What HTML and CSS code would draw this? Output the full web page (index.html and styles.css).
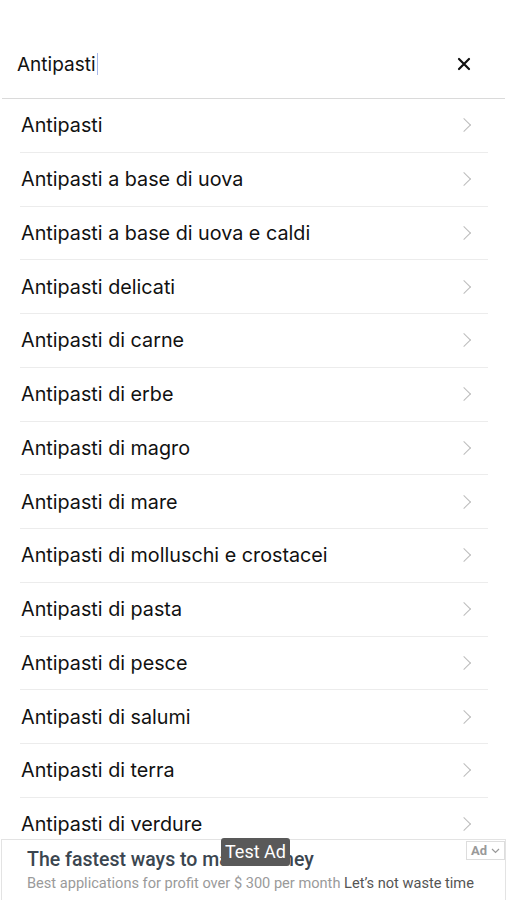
FILE: index.html
```html
<!DOCTYPE html>
<html lang="it">
<head>
    <meta charset="UTF-8">
    <meta name="viewport" content="width=device-width, initial-scale=1.0">
    <title>Ricerca categorie</title>
    <link rel="stylesheet" href="styles.css">
</head>
<body>

    <div class="search-bar">
        <div class="search-input">Antipasti<span class="caret"></span></div>
        <button class="clear-btn" aria-label="Cancella">
            <svg width="14" height="14" viewBox="0 0 14 14">
                <path d="M2 2 L12 12 M12 2 L2 12" stroke="#111" stroke-width="2.2" stroke-linecap="round"/>
            </svg>
        </button>
    </div>

    <ul class="results">
        <li class="row">Antipasti</li>
        <li class="row">Antipasti a base di uova</li>
        <li class="row">Antipasti a base di uova e caldi</li>
        <li class="row">Antipasti delicati</li>
        <li class="row">Antipasti di carne</li>
        <li class="row">Antipasti di erbe</li>
        <li class="row">Antipasti di magro</li>
        <li class="row">Antipasti di mare</li>
        <li class="row">Antipasti di molluschi e crostacei</li>
        <li class="row">Antipasti di pasta</li>
        <li class="row">Antipasti di pesce</li>
        <li class="row">Antipasti di salumi</li>
        <li class="row">Antipasti di terra</li>
        <li class="row">Antipasti di verdure</li>
    </ul>

    <!-- banner pubblicitario in basso -->
    <div class="ad-banner">
        <div class="ad-title">The fastest ways to make money</div>
        <div class="ad-text">Best applications for profit over $ 300 per month <span class="ad-strong">Let’s not waste time</span></div>
        <span class="test-badge">Test Ad</span>
        <span class="ad-label">Ad
            <svg width="9" height="6" viewBox="0 0 9 6"><path d="M1 1 L4.5 4.5 L8 1" fill="none" stroke="#999" stroke-width="1.2"/></svg>
        </span>
    </div>

</body>
</html>
```

FILE: styles.css
```css
/* --- layout generale --- */
body {
    margin: 0;
    background-color: white;
    font-family: Inter, 'Liberation Sans', Arial, sans-serif;
    color: #111;
    height: 900px;
    overflow: hidden;
}

/* barra di ricerca */
.search-bar {
    display: flex;
    align-items: center;
    justify-content: space-between;
    height: 68px;
    margin: 30px 2px 0 2px;
    padding: 0 34px 0 15px;
    border-bottom: 1px solid #dadada;
}

.search-input {
    font-size: 19px;
    display: flex;
    align-items: center;
}

.caret {
    display: inline-block;
    width: 1px;
    height: 22px;
    margin-left: 1px;
    background-color: #a8b8ea;
}

.clear-btn {
    border: none;
    background: none;
    padding: 0;
    display: flex;
    cursor: pointer;
}

/* lista dei risultati */
.results {
    list-style: none;
    margin: 0 19px 0 20px;
    padding: 0;
}

.row {
    display: flex;
    align-items: center;
    justify-content: space-between;
    height: 53.75px;
    box-sizing: border-box;
    padding: 0 19px 0 1px;
    font-size: 19.75px;
    border-bottom: 1px solid #ececec;
}

.row::after {
    content: "";
    width: 9px;
    height: 9px;
    border-top: 1.6px solid #bcbcbc;
    border-right: 1.6px solid #bcbcbc;
    transform: rotate(45deg);
}

/* annuncio */
.ad-banner {
    position: fixed;
    left: 1px;
    right: 1px;
    bottom: 0;
    height: 61px;
    box-sizing: border-box;
    background-color: white;
    border: 1px solid #e3e3e3;
    border-bottom: none;
    padding: 8px 0 0 25px;
    font-family: Roboto, sans-serif;
}

.ad-title {
    font-size: 19.5px;
    font-weight: 500;
    color: #3b4650;
}

.ad-text {
    margin-top: 3px;
    font-size: 14.6px;
    color: #9a9a9a;
}

.ad-strong {
    color: #555;
}

.test-badge {
    position: absolute;
    left: 219px;
    top: -2px;
    padding: 3px 4px 4px;
    background-color: #595959;
    color: white;
    font-size: 18px;
    border-radius: 3px;
}

.ad-label {
    position: absolute;
    right: 0;
    top: 1px;
    display: flex;
    align-items: center;
    gap: 4px;
    padding: 1px 4px;
    border: 1px solid #ddd;
    font-size: 13px;
    font-weight: bold;
    color: #999;
}
```
